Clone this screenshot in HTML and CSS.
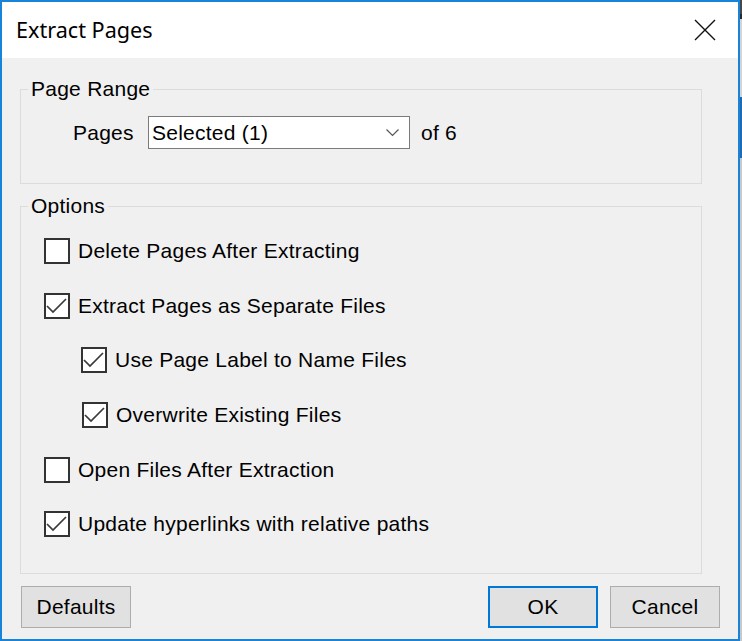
FILE: index.html
```html
<!DOCTYPE html>
<html>
<head>
<meta charset="utf-8">
<link rel="stylesheet" href="styles.css">
</head>
<body>
<div class="window">
  <div class="titlebar">
    <span class="title">Extract Pages</span>
    <svg class="close" width="22" height="22" viewBox="0 0 22 22"><path d="M1 1 L21 21 M21 1 L1 21" stroke="#111" stroke-width="1.4" fill="none"/></svg>
  </div>
  <div class="content">
    <fieldset class="group range">
      <legend>Page Range</legend>
      <div class="range-body">
        <span class="pages-label">Pages</span>
        <div class="combo">
          <span class="combo-text">Selected (1)</span>
          <svg class="chev" width="14" height="8" viewBox="0 0 14 8"><path d="M0.5 0.5 L6.5 6.5 L12.5 0.5" stroke="#555" stroke-width="1.2" fill="none"/></svg>
        </div>
        <span class="of">of 6</span>
      </div>
    </fieldset>
    <fieldset class="group options">
      <legend>Options</legend>
      <div class="options-body">
        <div class="row"><span class="box"></span><span class="lbl">Delete Pages After Extracting</span></div>
        <div class="row"><span class="box"><svg width="22" height="22" viewBox="0 0 22 22"><path d="M1 11 L7 17 L20 4" stroke="#3a3a3a" stroke-width="1.7" fill="none"/></svg></span><span class="lbl">Extract Pages as Separate Files</span></div>
        <div class="row sub"><span class="box"><svg width="22" height="22" viewBox="0 0 22 22"><path d="M1 11 L7 17 L20 4" stroke="#3a3a3a" stroke-width="1.7" fill="none"/></svg></span><span class="lbl">Use Page Label to Name Files</span></div>
        <div class="row sub sub2"><span class="box"><svg width="22" height="22" viewBox="0 0 22 22"><path d="M1 11 L7 17 L20 4" stroke="#3a3a3a" stroke-width="1.7" fill="none"/></svg></span><span class="lbl">Overwrite Existing Files</span></div>
        <div class="row"><span class="box"></span><span class="lbl">Open Files After Extraction</span></div>
        <div class="row"><span class="box"><svg width="22" height="22" viewBox="0 0 22 22"><path d="M1 11 L7 17 L20 4" stroke="#3a3a3a" stroke-width="1.7" fill="none"/></svg></span><span class="lbl">Update hyperlinks with relative paths</span></div>
      </div>
    </fieldset>
    <div class="buttons">
      <button class="btn">Defaults</button>
      <span class="spacer"></span>
      <button class="btn primary">OK</button>
      <button class="btn">Cancel</button>
    </div>
  </div>
</div>
<div class="strip"></div>
</body>
</html>
```
FILE: styles.css
```css
html, body {
  margin: 0;
  padding: 0;
  background: #cfcfcf;
}
body {
  display: flex;
  width: 742px;
  height: 641px;
  overflow: hidden;
  font-family: "Liberation Sans", Arial, sans-serif;
  font-size: 21px;
  letter-spacing: 0.25px;
  color: #000;
}
.window {
  box-sizing: border-box;
  width: 740px;
  height: 641px;
  border: 2px solid #1883d7;
  display: flex;
  flex-direction: column;
  background: #f0f0f0;
}
.strip {
  width: 2px;
  height: 641px;
  background: linear-gradient(to bottom, #474747 0, #474747 14px, #2a2a2a 14px, #2a2a2a 19px, #d4d4d4 19px, #d4d4d4 97px, #1f6ab0 97px, #1f6ab0 158px, #c9c9c9 158px);
}
.titlebar {
  height: 56px;
  background: #fff;
  display: flex;
  align-items: center;
  padding-left: 14px;
  padding-right: 22px;
}
.title {
  font-family: "Noto Sans", "Open Sans", sans-serif;
  font-size: 21.6px;
  letter-spacing: 0;
  flex: 1;
  margin-top: -1px;
}
.close {
  display: block;
  margin-top: -1px;
}
.content {
  flex: 1;
  display: flex;
  flex-direction: column;
  padding: 0 0 0 18px;
}
.group {
  box-sizing: border-box;
  width: 682px;
  margin: 0;
  border: 1px solid #dcdcdc;
  padding: 0;
  min-width: 0;
}
.group legend {
  line-height: 22px;
  padding: 0 3px;
  margin-left: 7px;
}
.range {
  margin-top: 20px;
}
.range-body {
  display: flex;
  align-items: center;
  height: 33px;
  padding: 16px 0 34px 52px;
}
.pages-label {
  width: 75px;
}
.combo {
  box-sizing: border-box;
  width: 262px;
  height: 33px;
  border: 1px solid #7a7a7a;
  background: #fff;
  display: flex;
  align-items: center;
  padding-left: 3px;
  padding-right: 9px;
}
.combo-text {
  flex: 1;
}
.chev {
  display: block;
  margin-top: 1px;
}
.of {
  margin-left: 11px;
}
.options {
  margin-top: 11px;
}
.options-body {
  padding: 7px 0 21px 23px;
}
.row {
  height: 54.6px;
  display: flex;
  align-items: center;
}
.row.sub {
  padding-left: 37px;
}
.row.sub2 {
  padding-left: 38px;
}
.box {
  box-sizing: border-box;
  width: 26px;
  height: 26px;
  border: 2px solid #333;
  background: #fff;
  flex: none;
  display: block;
}
.box svg {
  display: block;
}
.lbl {
  margin-left: 8px;
}
.buttons {
  display: flex;
  margin-top: 12px;
  padding-right: 18px;
  margin-left: 1px;
}
.spacer {
  flex: 1;
}
.btn {
  box-sizing: border-box;
  width: 110px;
  height: 42px;
  background: #e1e1e1;
  border: 1px solid #adadad;
  font-family: "Liberation Sans", Arial, sans-serif;
  font-size: 21px;
  letter-spacing: 0.25px;
  color: #000;
  padding: 0;
  margin: 0;
}
.btn.primary {
  border: 2px solid #0078d7;
  margin-right: 12px;
}
```
